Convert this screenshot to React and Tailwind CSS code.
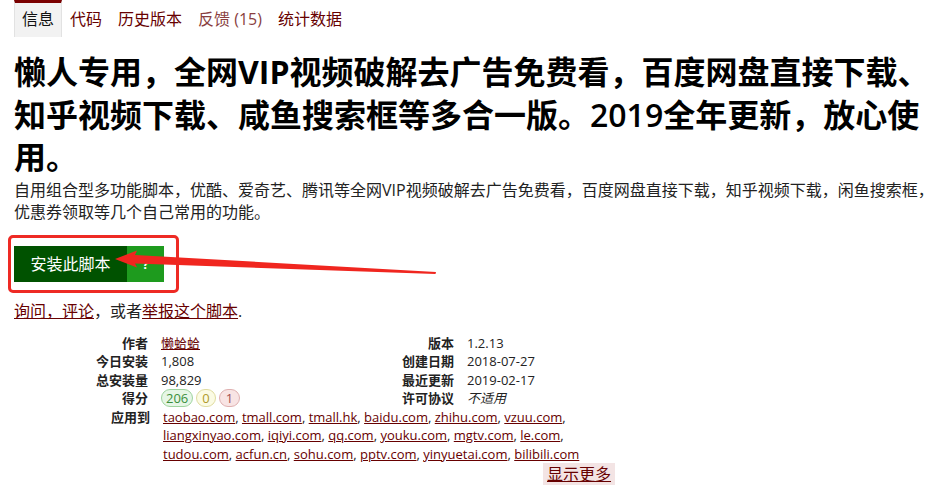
export default function App() {
  const link = "text-[#670000] underline decoration-[#670000]";
  const apply1 = ["taobao.com", "tmall.com", "tmall.hk", "baidu.com", "zhihu.com", "vzuu.com"];
  const apply2 = ["liangxinyao.com", "iqiyi.com", "qq.com", "youku.com", "mgtv.com", "le.com"];
  const apply3 = ["tudou.com", "acfun.cn", "sohu.com", "pptv.com", "yinyuetai.com", "bilibili.com"];
  const line = (arr, last) => (
    <div className="whitespace-nowrap">
      {arr.map((d, i) => (
        <span key={d}>
          <a className={link}>{d}</a>
          {i < arr.length - 1 || !last ? ", " : ""}
        </span>
      ))}
    </div>
  );
  return (
    <div className="relative w-[952px] h-[485px] overflow-hidden bg-white text-[#222] font-['Open_Sans','Noto_Sans_CJK_SC',sans-serif]">
      {/* tabs */}
      <div className="flex pl-[14px] text-[16px] leading-[22px]">
        <div className="px-[7px] pt-[5px] pb-[7px] bg-[#f2f2f2] border-t-[3px] border-t-[#7a0000] border-x border-x-[#e2e2e2] text-[#111]">信息</div>
        <div className="px-2 pt-[8px] text-[#670000]">代码</div>
        <div className="px-2 pt-[8px] text-[#670000]">历史版本</div>
        <div className="px-2 pt-[8px] text-[#8a3f3f]">反馈 (15)</div>
        <div className="px-2 pt-[8px] text-[#670000]">统计数据</div>
      </div>

      <div className="px-[14px]">
        <h2 className="mt-[14px] text-[32px] leading-[42.5px] font-bold text-black whitespace-nowrap">
          懒人专用，全网VIP视频破解去广告免费看，百度网盘直接下载、
          <br />
          知乎视频下载、咸鱼搜索框等多合一版。<span className="font-semibold">2019</span>全年更新，放心使
          <br />
          用。
        </h2>
        <p className="text-[16px] leading-[22px] text-[#222] whitespace-nowrap">
          自用组合型多功能脚本，优酷、爱奇艺、腾讯等全网VIP视频破解去广告免费看，百度网盘直接下载，知乎视频下载，闲鱼搜索框，
          <br />
          优惠券领取等几个自己常用的功能。
        </p>

        <div className="mt-[23px] flex text-[16px] leading-[22px] text-white">
          <div className="w-[113px] py-[7px] text-center bg-[#005200]">安装此脚本</div>
          <div className="w-[37px] py-[7px] text-center bg-[#1e9b1e] text-[13px] font-bold">?</div>
        </div>

        <div className="mt-[18px] text-[16px] leading-[22px] text-[#222]">
          <a className={link}>询问，评论</a>，或者<a className={link}>举报这个脚本</a>.
        </div>

        <div className="mt-[12px] text-[13px] leading-[18.5px]">
          <div className="flex">
            <div className="w-[360px] grid grid-cols-[134px_1fr] gap-x-[13px]">
              <div className="text-right font-bold">作者</div>
              <div><a className={link}>懒蛤蛤</a></div>
              <div className="text-right font-bold">今日安装</div>
              <div>1,808</div>
              <div className="text-right font-bold">总安装量</div>
              <div>98,829</div>
              <div className="text-right font-bold">得分</div>
              <div className="flex items-center gap-[3px]">
                <span className="rounded-full border border-[#9fd49f] bg-[#e6f6e6] text-[#3b8f3b] px-[4px] leading-[16px]">206</span>
                <span className="rounded-full border border-[#e0dca0] bg-[#fbfbe4] text-[#b09a2a] px-[5px] leading-[16px]">0</span>
                <span className="rounded-full border border-[#dfb0b0] bg-[#f8e4e4] text-[#a05050] px-[6px] leading-[16px]">1</span>
              </div>
            </div>
            <div className="grid grid-cols-[80px_1fr] gap-x-[13px] content-start">
              <div className="text-right font-bold">版本</div>
              <div>1.2.13</div>
              <div className="text-right font-bold">创建日期</div>
              <div>2018-07-27</div>
              <div className="text-right font-bold">最近更新</div>
              <div>2019-02-17</div>
              <div className="text-right font-bold">许可协议</div>
              <div className="italic">不适用</div>
            </div>
          </div>
          <div className="grid grid-cols-[136px_1fr] gap-x-[13px]">
            <div className="text-right font-bold">应用到</div>
            <div>
              {line(apply1, false)}
              {line(apply2, false)}
              {line(apply3, true)}
            </div>
          </div>
          <div className="ml-[529px] inline-block px-[4px] bg-[#f3e4e4] text-[16px] leading-[22px]">
            <a className={link}>显示更多</a>
          </div>
        </div>
      </div>

      {/* annotation box */}
      <div className="absolute left-[8px] top-[235px] w-[171px] h-[58px] border-[3px] border-[#ee2a24] rounded-[5px]" />
      {/* annotation arrow */}
      <svg className="absolute left-0 top-0" width="952" height="485" viewBox="0 0 952 485">
        <polygon
          points="115,259 137,250.5 135,255 436,272 435.5,274 135,263.5 137,267.5"
          fill="#f0261f"
        />
      </svg>
    </div>
  );
}
